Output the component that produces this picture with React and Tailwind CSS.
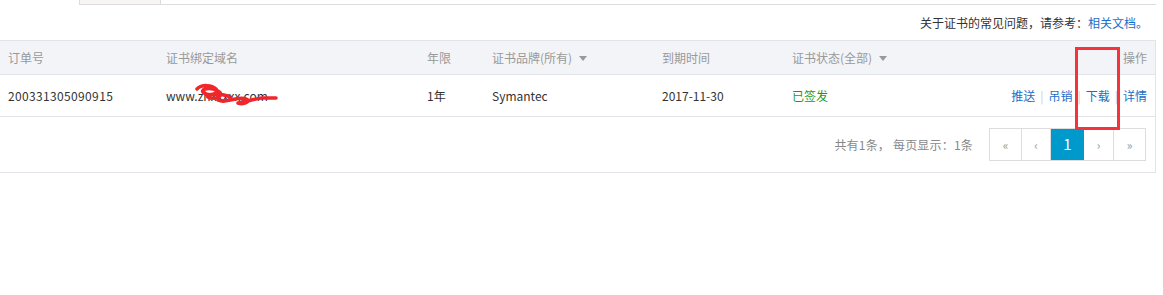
export default function App() {
  const font = { fontFamily: '"Noto Sans CJK SC", "Liberation Sans", sans-serif' };

  return (
    <div className="relative w-[1163px] h-[295px] bg-white text-[12px] text-[#333]" style={font}>
      {/* tabs strip */}
      <div className="flex w-[1156px] h-[5px]">
        <div className="w-[79px] shrink-0" />
        <div className="w-[82px] shrink-0 bg-[#f7f6f4] border-x border-b border-[#dcdcdc]" />
        <div className="flex-1 border-b border-[#dcdcdc]" />
      </div>

      <div className="w-[1156px] h-[35px] flex items-center justify-end pr-[8px]">
        <span>关于证书的常见问题，请参考：</span>
        <span className="text-[#1a6ec8]">相关文档。</span>
      </div>

      {/* table */}
      <div className="w-[1156px] border-t border-r border-[#e1e5ea]">
        <div className="grid grid-cols-[158px_261px_65px_170px_130px_1fr_auto] items-center h-[34px] pl-[8px] pr-[8px] bg-[#f3f4f8] border-b border-[#e1e5ea] text-[#999]">
          <div>订单号</div>
          <div>证书绑定域名</div>
          <div>年限</div>
          <div className="flex items-center">
            证书品牌(所有)
            <span className="ml-[7px] mt-[1px] w-0 h-0 border-x-[4px] border-x-transparent border-t-[5px] border-t-[#999]" />
          </div>
          <div>到期时间</div>
          <div className="flex items-center">
            证书状态(全部)
            <span className="ml-[7px] mt-[1px] w-0 h-0 border-x-[4px] border-x-transparent border-t-[5px] border-t-[#999]" />
          </div>
          <div className="text-right">操作</div>
        </div>

        <div className="grid grid-cols-[158px_261px_65px_170px_130px_1fr_auto] items-center h-[42px] pl-[8px] pr-[8px] border-b border-[#e1e5ea]">
          <div className="tracking-[0.35px]">200331305090915</div>
          <div className="relative">
            www.zhxxxxx.com
            <svg className="absolute left-[28px] top-[-4px]" width="86" height="24" viewBox="0 0 86 24" fill="none">
              <path
                d="M3 6 C8 1 18 2 22 6 C26 10 16 14 10 10 C5 7 14 3 24 8 C32 12 20 18 14 14 C10 11 26 10 34 13 C42 16 30 20 24 17 C34 20 44 13 52 16 C58 18 50 22 44 20 C52 19 62 15 70 15 L82 15"
                stroke="#f0262b"
                strokeWidth="3.5"
                strokeLinecap="round"
                strokeLinejoin="round"
              />
            </svg>
          </div>
          <div>1年</div>
          <div>Symantec</div>
          <div>2017-11-30</div>
          <div className="text-[#1f9a1f]">已签发</div>
          <div className="flex items-center text-[#1a6ec8]">
            <span>推送</span>
            <span className="mx-[5px] text-[#ccc]">|</span>
            <span>吊销</span>
            <span className="mx-[5px] text-[#ccc]">|</span>
            <span>下载</span>
            <span className="mx-[5px] text-[#ccc]">|</span>
            <span>详情</span>
          </div>
        </div>

        <div className="flex items-center justify-end h-[56px] pr-[9px] border-b border-[#e1e5ea]">
          <span className="text-[#888] mr-[16px] tracking-[0.2px]">共有1条， 每页显示：1条</span>
          <div className="flex h-[33px] border border-[#ddd] text-[#999]">
            <div className="w-[32px] flex items-center justify-center border-r border-[#ddd]">«</div>
            <div className="w-[29px] flex items-center justify-center border-r border-[#ddd]">‹</div>
            <div className="w-[33px] flex items-center justify-center bg-[#0099cc] text-white text-[15px]">1</div>
            <div className="w-[30px] flex items-center justify-center border-r border-[#ddd]">›</div>
            <div className="w-[31px] flex items-center justify-center">»</div>
          </div>
        </div>
      </div>

      {/* red annotation box */}
      <div className="absolute left-[1075px] top-[47px] w-[45px] h-[83px] border-[3px] border-[#f4343a]" />
    </div>
  );
}
